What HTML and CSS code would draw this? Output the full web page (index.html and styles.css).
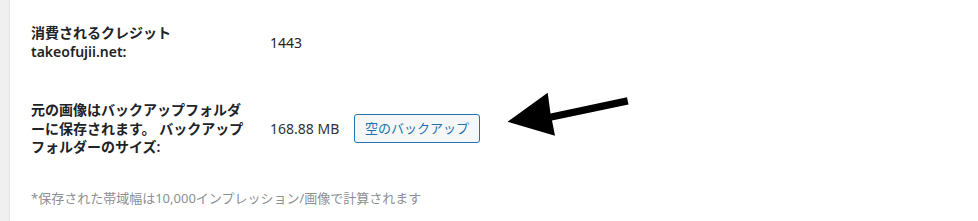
FILE: index.html
```html
<!DOCTYPE html>
<html lang="ja">
<head>
<meta charset="utf-8">
<link rel="stylesheet" href="styles.css">
</head>
<body>
<div class="page">
  <div class="sidebar"></div>
  <div class="panel">
    <div class="rows">
      <div class="row">
        <div class="label">消費されるクレジット<br>takeofujii.net:</div>
        <div class="value">1443</div>
      </div>
      <div class="row">
        <div class="label">元の画像はバックアップフォルダーに保存されます。 バックアップフォルダーのサイズ:</div>
        <div class="value">168.88 MB</div>
        <button class="btn">空のバックアップ</button>
      </div>
    </div>
    <p class="note">*保存された帯域幅は10,000インプレッション/画像で計算されます</p>
    <svg class="arrow" width="140" height="60" viewBox="500 85 140 60" xmlns="http://www.w3.org/2000/svg">
      <polygon points="507.5,121.7 547.7,92.7 550.5,113.5 627,97.3 628.5,104.5 552,120.5 555,135.7" fill="#000"/>
    </svg>
  </div>
</div>
</body>
</html>
```
FILE: styles.css
```css
html, body {
  margin: 0;
  padding: 0;
  background: #fff;
}
.page {
  display: flex;
  width: 978px;
  height: 221px;
  overflow: hidden;
  font-family: "Segoe UI", "Noto Sans", "Noto Sans CJK JP", sans-serif;
  color: #1d2327;
}
.sidebar {
  width: 9px;
  flex: none;
  background: #f0f0f1;
  border-right: 1px solid #e6e6e8;
}
.panel {
  position: relative;
  flex: 1;
  padding: 4px 0 0 21px;
}
.rows {
  display: flex;
  flex-direction: column;
}
.row {
  display: flex;
  align-items: center;
  padding: 20px 0;
}
.label {
  width: 217px;
  padding-right: 22px;
  font-size: 14px;
  font-weight: 600;
  line-height: 18.5px;
  flex: none;
}
.value {
  font-size: 14px;
  line-height: 18px;
  color: #1d2327;
  width: 84px;
  flex: none;
}
.row:last-child .value {
  color: #2c3338;
}
.btn {
  font-family: inherit;
  font-size: 13px;
  color: #2271b1;
  background: #f6f7f7;
  border: 1px solid #2271b1;
  border-radius: 3px;
  height: 29px;
  padding: 0 10px;
  line-height: 27px;
}
.note {
  margin: 12px 0 0;
  font-size: 13px;
  line-height: 18px;
  color: #8c8f94;
}
.arrow {
  position: absolute;
  left: 490px;
  top: 85px;
}
```
